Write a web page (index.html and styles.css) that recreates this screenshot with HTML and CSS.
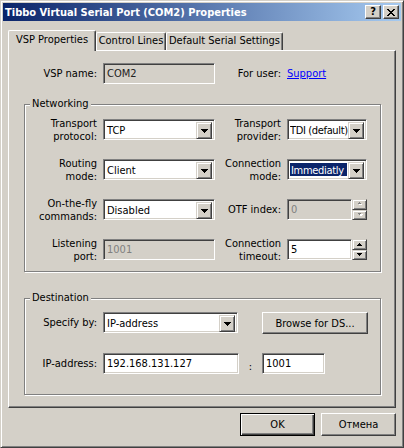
FILE: index.html
```html
<!DOCTYPE html>
<html>
<head>
<meta charset="utf-8">
<link rel="stylesheet" href="styles.css">
</head>
<body>
<div class="window">
  <div class="titlebar">
    <span class="title">Tibbo Virtual Serial Port (COM2) Properties</span>
    <div class="capbtns">
      <span class="capbtn help">?</span>
      <span class="capbtn close"><svg width="8" height="7" viewBox="0 0 8 7" shape-rendering="crispEdges"><path d="M0 0h2v1H0z M6 0h2v1H6z M1 1h2v1H1z M5 1h2v1H5z M2 2h4v1H2z M3 3h2v1H3z M2 4h4v1H2z M1 5h2v1H1z M5 5h2v1H5z M0 6h2v1H0z M6 6h2v1H6z" fill="#000"/></svg></span>
    </div>
  </div>
  <div class="content">
    <div class="tabs">
      <div class="tab active t1">VSP Properties</div>
      <div class="tab t2">Control Lines</div>
      <div class="tab t3">Default Serial Settings</div>
    </div>
    <div class="panel">
      <div class="row top">
        <span class="lbl">VSP name:</span>
        <div class="edit readonly">COM2</div>
        <span class="lbl">For user:</span>
        <span class="link">Support</span>
      </div>

      <div class="group net">
        <div class="legend"><span>Networking</span></div>
        <div class="grid">
          <span class="lbl">Transport<br>protocol:</span>
          <div class="combo"><span class="val">TCP</span><span class="dd"><svg width="7" height="4" viewBox="0 0 7 4" shape-rendering="crispEdges"><path d="M0 0h7v1H0z M1 1h5v1H1z M2 2h3v1H2z M3 3h1v1H3z"/></svg></span></div>
          <span class="lbl">Transport<br>provider:</span>
          <div class="combo"><span class="val tight">TDI (default)</span><span class="dd"><svg width="7" height="4" viewBox="0 0 7 4" shape-rendering="crispEdges"><path d="M0 0h7v1H0z M1 1h5v1H1z M2 2h3v1H2z M3 3h1v1H3z"/></svg></span></div>

          <span class="lbl">Routing<br>mode:</span>
          <div class="combo"><span class="val">Client</span><span class="dd"><svg width="7" height="4" viewBox="0 0 7 4" shape-rendering="crispEdges"><path d="M0 0h7v1H0z M1 1h5v1H1z M2 2h3v1H2z M3 3h1v1H3z"/></svg></span></div>
          <span class="lbl">Connection<br>mode:</span>
          <div class="combo"><span class="val sel">Immediatly</span><span class="dd"><svg width="7" height="4" viewBox="0 0 7 4" shape-rendering="crispEdges"><path d="M0 0h7v1H0z M1 1h5v1H1z M2 2h3v1H2z M3 3h1v1H3z"/></svg></span></div>

          <span class="lbl">On-the-fly<br>commands:</span>
          <div class="combo"><span class="val">Disabled</span><span class="dd"><svg width="7" height="4" viewBox="0 0 7 4" shape-rendering="crispEdges"><path d="M0 0h7v1H0z M1 1h5v1H1z M2 2h3v1H2z M3 3h1v1H3z"/></svg></span></div>
          <span class="lbl">OTF index:</span>
          <div class="spin">
            <div class="edit disabled">0</div>
            <div class="updown">
              <span class="ud"><svg width="6" height="4" viewBox="0 0 6 4" shape-rendering="crispEdges"><path d="M3 1h1v1H3z M2 2h3v1H2z" fill="#fff"/><path d="M2 0h1v1H2z M1 1h3v1H1z" fill="#808080"/></svg></span>
              <span class="ud"><svg width="6" height="4" viewBox="0 0 6 4" shape-rendering="crispEdges"><path d="M2 1h4v1H2z M3 2h2v1H3z" fill="#fff"/><path d="M1 0h3v1H1z M2 1h1v1H2z" fill="#808080"/></svg></span>
            </div>
          </div>

          <span class="lbl">Listening<br>port:</span>
          <div class="edit disabled">1001</div>
          <span class="lbl">Connection<br>timeout:</span>
          <div class="spin">
            <div class="edit">5</div>
            <div class="updown">
              <span class="ud"><svg width="5" height="3" viewBox="0 0 5 3" shape-rendering="crispEdges"><path d="M2 0h1v1H2z M1 1h3v1H1z M0 2h5v1H0z"/></svg></span>
              <span class="ud"><svg width="5" height="3" viewBox="0 0 5 3" shape-rendering="crispEdges"><path d="M0 0h5v1H0z M1 1h3v1H1z M2 2h1v1H2z"/></svg></span>
            </div>
          </div>
        </div>
      </div>

      <div class="group dest">
        <div class="legend"><span>Destination</span></div>
        <div class="drow first">
          <span class="lbl">Specify by:</span>
          <div class="combo wide"><span class="val">IP-address</span><span class="dd"><svg width="7" height="4" viewBox="0 0 7 4" shape-rendering="crispEdges"><path d="M0 0h7v1H0z M1 1h5v1H1z M2 2h3v1H2z M3 3h1v1H3z"/></svg></span></div>
          <div class="btn browse">Browse for DS...</div>
        </div>
        <div class="drow second">
          <span class="lbl">IP-address:</span>
          <div class="edit ip">192.168.131.127</div>
          <span class="colon">:</span>
          <div class="edit port">1001</div>
        </div>
      </div>
    </div>
    <div class="buttons">
      <div class="btn default">OK</div>
      <div class="btn">Отмена</div>
    </div>
  </div>
</div>
</body>
</html>
```

FILE: styles.css
```css
html, body {
  margin: 0;
  padding: 0;
  background: #D4D0C8;
}
body {
  font-family: "DejaVu Sans Condensed", "Liberation Sans", sans-serif;
  font-size: 11px;
  color: #000;
}
.window {
  width: 404px;
  height: 448px;
  box-sizing: border-box;
  border: 1px solid;
  border-color: #D4D0C8 #404040 #404040 #D4D0C8;
  box-shadow: inset 1px 1px #fff, inset -1px -1px #808080;
  padding: 2px;
  background: #D4D0C8;
}
.titlebar {
  height: 18px;
  display: flex;
  align-items: center;
  padding: 0 2px 0 2px;
  background: linear-gradient(to right, #0A246A, #A6CAF0);
}
.title {
  flex: 1;
  color: #fff;
  font-weight: bold;
  white-space: nowrap;
}
.capbtns {
  display: flex;
  gap: 2px;
}
.capbtn {
  width: 16px;
  height: 14px;
  box-sizing: border-box;
  display: flex;
  align-items: center;
  justify-content: center;
  background: #D4D0C8;
  border: 1px solid;
  border-color: #fff #404040 #404040 #fff;
  box-shadow: inset -1px -1px #808080;
  font-weight: bold;
  font-size: 11px;
  line-height: 12px;
}
.content {
  padding: 0 5px;
}
.tabs {
  display: flex;
  align-items: flex-end;
  height: 20px;
  margin-top: 9px;
}
.tab {
  height: 18px;
  box-sizing: border-box;
  border-top: 1px solid #fff;
  border-left: 1px solid #fff;
  border-right: 1px solid #404040;
  box-shadow: inset -1px 0 #808080;
  border-radius: 2px 2px 0 0;
  text-align: center;
  line-height: 16px;
  white-space: nowrap;
}
.tab.active {
  height: 21px;
  margin-bottom: -1px;
  position: relative;
  z-index: 1;
  background: #D4D0C8;
  line-height: 18px;
}
.t1 { width: 88px; }
.t2 { width: 70px; }
.t3 { width: 117px; }
.panel {
  height: 358px;
  box-sizing: border-box;
  border: 1px solid;
  border-color: #fff #404040 #404040 #fff;
  box-shadow: inset -1px -1px #808080;
  padding: 12px 15px 0 15px;
}
.row.top {
  display: grid;
  grid-template-columns: 79px 112px 72px 80px;
  height: 21px;
  align-items: center;
}
.lbl {
  text-align: right;
  padding-right: 6px;
  line-height: 13px;
  white-space: nowrap;
}
.link {
  color: #0000FF;
  text-decoration: underline;
}
.edit {
  height: 21px;
  box-sizing: border-box;
  border: 1px solid;
  border-color: #808080 #fff #fff #808080;
  box-shadow: inset 1px 1px #404040, inset -1px -1px #D4D0C8;
  background: #fff;
  padding-left: 3px;
  line-height: 19px;
  white-space: nowrap;
}
.edit.readonly {
  background: #D4D0C8;
  color: #222;
}
.edit.disabled {
  background: #D4D0C8;
  color: #808080;
}
.group {
  border: 1px solid #808080;
  box-shadow: inset 1px 1px #fff, 1px 1px #fff;
  width: 355px;
}
.group.net {
  margin-top: 20px;
}
.group.dest {
  margin-top: 26px;
  padding-bottom: 17px;
}
.legend {
  height: 13px;
  line-height: 13px;
  margin: -8px 0 0 5px;
}
.legend span {
  background: #D4D0C8;
  padding: 0 2px;
}
.grid {
  display: grid;
  grid-template-columns: 78px 112px 72px 80px;
  grid-auto-rows: 21px;
  row-gap: 19px;
  align-items: center;
  margin-top: 9px;
  padding-bottom: 11px;
}
.combo {
  display: flex;
  height: 21px;
  box-sizing: border-box;
  border: 1px solid;
  border-color: #808080 #fff #fff #808080;
  box-shadow: inset 1px 1px #404040, inset -1px -1px #D4D0C8;
  background: #fff;
  padding: 2px;
}
.combo.wide {
  width: 135px;
}
.val {
  flex: 1;
  min-width: 0;
  line-height: 17px;
  padding-left: 1px;
  white-space: nowrap;
  overflow: hidden;
}
.val.tight {
  letter-spacing: -0.35px;
  padding-left: 0;
}
.val.sel {
  background: #0A246A;
  color: #fff;
  margin: 1px 1px 1px 0;
  line-height: 15px;
  letter-spacing: -0.3px;
}
.dd {
  flex: none;
  width: 16px;
  height: 17px;
  box-sizing: border-box;
  display: flex;
  align-items: center;
  justify-content: center;
  background: #D4D0C8;
  border: 1px solid;
  border-color: #D4D0C8 #404040 #404040 #D4D0C8;
  box-shadow: inset 1px 1px #fff, inset -1px -1px #808080;
}
.spin {
  display: flex;
  height: 21px;
}
.spin .edit {
  width: 65px;
}
.updown {
  width: 15px;
  display: flex;
  flex-direction: column;
}
.ud {
  flex: 1;
  box-sizing: border-box;
  display: flex;
  align-items: center;
  justify-content: center;
  background: #D4D0C8;
  border: 1px solid;
  border-color: #D4D0C8 #404040 #404040 #D4D0C8;
  box-shadow: inset 1px 1px #fff, inset -1px -1px #808080;
}
.drow {
  display: flex;
  align-items: flex-start;
}
.drow .lbl {
  width: 78px;
  box-sizing: border-box;
  line-height: 21px;
}
.drow.first {
  margin-top: 8px;
  height: 21px;
}
.drow.second {
  margin-top: 20px;
}
.btn {
  box-sizing: border-box;
  height: 23px;
  width: 75px;
  display: flex;
  align-items: center;
  justify-content: center;
  background: #D4D0C8;
  border: 1px solid;
  border-color: #fff #404040 #404040 #fff;
  box-shadow: inset -1px -1px #808080;
  white-space: nowrap;
}
.btn.browse {
  width: 106px;
  height: 22px;
  margin-left: 24px;
}
.btn.default {
  border: 1px solid #000;
  box-shadow: inset 1px 1px #fff, inset -1px -1px #404040, inset -2px -2px #808080;
}
.edit.ip {
  width: 136px;
}
.colon {
  width: 23px;
  text-align: center;
  line-height: 21px;
  padding-top: 3px;
}
.edit.port {
  width: 63px;
}
.buttons {
  display: flex;
  justify-content: flex-end;
  gap: 6px;
  margin-top: 5px;
}
```
